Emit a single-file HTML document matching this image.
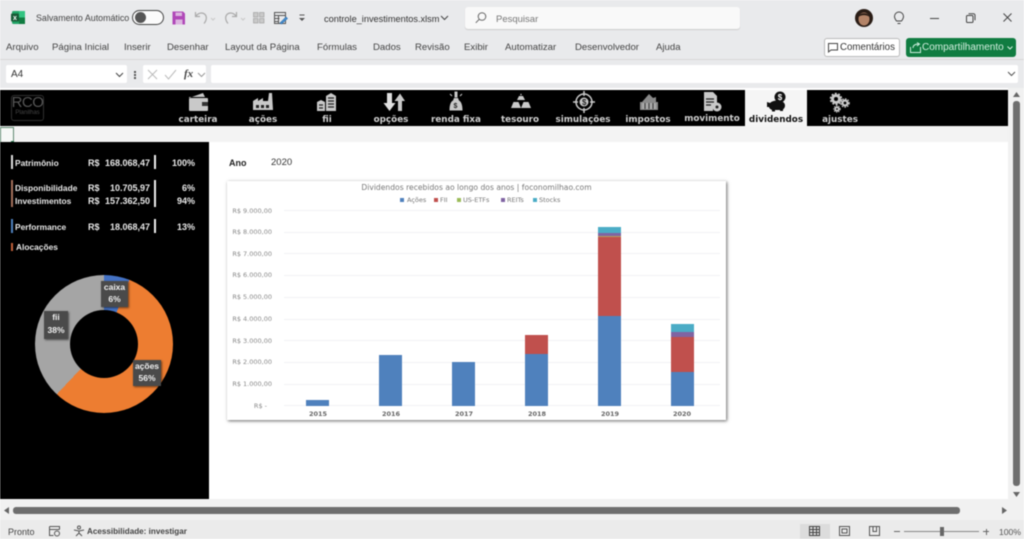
<!DOCTYPE html>
<html lang="pt"><head><meta charset="utf-8"><title>controle_investimentos</title>
<style>
html,body{margin:0;padding:0;width:1024px;height:539px;overflow:hidden;background:#fff}
#r{position:relative;width:1024px;height:539px;overflow:hidden;background:#e9eaec;font-family:"Liberation Sans",sans-serif;color:#333;filter:blur(.45px)}
.a{position:absolute;white-space:nowrap}
.m{font-size:9.6px;top:42px;color:#444;line-height:12px}
.n{position:absolute;top:114px;font:bold 8.8px/13px "DejaVu Sans",sans-serif;color:#cfcfcf;transform:translateX(-50%);white-space:nowrap}
.s{font:bold 9px/11px "Liberation Sans",sans-serif;color:#e8e8e8;position:absolute;white-space:nowrap;margin-top:1px}
.t{font-size:8.4px}
.rt{text-align:right}
.b{position:absolute;width:2px;background:#eee}
.y{position:absolute;font:6.5px/8px "DejaVu Sans",sans-serif;color:#888;width:55px;text-align:right;left:225px}
.g{position:absolute;left:284px;width:436px;height:1px;background:#f1f2f4}
.x{position:absolute;top:410px;font:bold 6.5px/8px "DejaVu Sans",sans-serif;color:#666;width:40px;text-align:center}
.l{position:absolute;background:#4a4a4a;color:#f0f0f0;font:bold 8.5px/12px "Liberation Sans",sans-serif;text-align:center;box-shadow:1px 1px 2px #0008}
.bar{position:absolute;width:23px}
svg{position:absolute;overflow:visible}
</style></head><body><div id="r">

<!-- title bar -->
<svg style="left:11px;top:11px" width="14" height="14"><rect x="1" y="0" width="13" height="13" rx="1.5" fill="#21a366"/><rect x="8" y="0" width="6" height="6.5" fill="#33c481"/><rect x="8" y="6.500" width="6" height="6.500" fill="#107c41"/><rect x="0" y="2.500" width="8" height="8" rx="1" fill="#185c37"/><text x="2" y="9" font-size="7" font-weight="bold" fill="#fff" font-family="Liberation Sans">x</text></svg>
<div class="a" style="left:36px;top:12px;font-size:8.9px;line-height:12px;color:#444">Salvamento Automático</div>
<div class="a" style="left:132px;top:10px;width:30px;height:13px;border:1px solid #444;border-radius:8px;background:#fbfbfb"></div>
<div class="a" style="left:135px;top:12px;width:11px;height:11px;border-radius:50%;background:#555"></div>
<svg style="left:172px;top:11px" width="14" height="14"><path d="M.5.5h10.500l2 2v11h-12.500z" fill="#b048b8"/><rect x="3.500" y="1.500" width="6.500" height="3.500" fill="#dcb4e0"/><rect x="3.500" y="8.500" width="7" height="5" fill="#dcb4e0"/></svg>
<svg style="left:194px;top:11px" width="24" height="14" fill="none" stroke="#aaa" stroke-width="1.200"><path d="M1.500 1v4.500h4.500M1.500 5.500C4 2 8 1 10.500 3c2.500 2 2.500 6-.5 9.500"/><path d="M17 7l2 2 2-2" stroke="#ccc"/></svg>
<svg style="left:224px;top:11px" width="24" height="14" fill="none" stroke="#aaa" stroke-width="1.200"><path d="M12.500 1v4.500H8M12.500 5.500C10 2 6 1 3.500 3 1 5 1 9 4 12.500"/><path d="M17 7l2 2 2-2" stroke="#ccc"/></svg>
<svg style="left:253px;top:12px" width="12" height="12" fill="#c9c9c9" stroke="#999" stroke-width=".6"><rect x=".5" y=".5" width="4.500" height="4.500"/><rect x="6.500" y=".5" width="4.500" height="4.500"/><rect x=".5" y="6.500" width="4.500" height="4.500"/><rect x="6.500" y="6.500" width="4.500" height="4.500"/></svg>
<svg style="left:274px;top:12px" width="14" height="13" fill="none" stroke="#555"><rect x=".5" y=".5" width="11" height="11"/><path d="M.5 3.500h11M.5 6.500h5M.5 9.500h4M4.500 3.500v8"/><path d="M6 11l6-6 1.500 1.500-6 5.500z" fill="#4a90d0" stroke="#2a70b0" stroke-width=".6"/></svg>
<svg style="left:298px;top:14px" width="8" height="8" fill="none" stroke="#555"><path d="M1.500 1h5"/><path d="M1 4l3 3 3-3z" fill="#555" stroke="none"/></svg>
<div class="a" style="left:324px;top:13px;font-size:9.2px;line-height:12px;color:#333">controle_investimentos.xlsm</div>
<svg style="left:440px;top:15px" width="9" height="6" fill="none" stroke="#444"><path d="M1 1l3.500 3.500L8 1"/></svg>
<div class="a" style="left:465px;top:7px;width:275px;height:22px;background:#f9f9f9;border-radius:3px;box-shadow:0 1px 1px #ccc"></div>
<svg style="left:475px;top:12px" width="12" height="12" fill="none" stroke="#666"><circle cx="7" cy="4.500" r="3.800"/><path d="M4.200 7.300L.8 10.800"/></svg>
<div class="a" style="left:496px;top:13px;font-size:9.500px;line-height:13px;color:#777">Pesquisar</div>
<svg style="left:855px;top:9px" width="18" height="18"><circle cx="9" cy="9" r="9" fill="#2a1d16"/><ellipse cx="9" cy="10" rx="5.500" ry="6.500" fill="#b48468"/><path d="M3.500 8C4 3 14 3 14.500 8 12 5.500 6 5.500 3.500 8z" fill="#2a1d16"/></svg>
<svg style="left:893px;top:11px" width="12" height="14" fill="none" stroke="#444"><path d="M3.500 10C2 8 1.500 7 1.500 5.500a4.500 4.500 0 0 1 9 0C10.500 7 10 8 8.500 10zM4.500 12.500h3"/></svg>
<div class="a" style="left:930px;top:18px;width:9px;height:1px;background:#444"></div>
<svg style="left:966px;top:13px" width="10" height="10" fill="none" stroke="#444"><rect x=".5" y="2.500" width="6.500" height="7" rx="1"/><path d="M2.500.8h5a1.500 1.500 0 0 1 1.500 1.500v5"/></svg>
<svg style="left:1003px;top:13px" width="9" height="9" fill="none" stroke="#444"><path d="M.5.5l8 8M8.500.5l-8 8"/></svg>

<!-- menu -->
<div class="a m" style="left:6px">Arquivo</div>
<div class="a m" style="left:52px">Página Inicial</div>
<div class="a m" style="left:124px">Inserir</div>
<div class="a m" style="left:167px">Desenhar</div>
<div class="a m" style="left:225px">Layout da Página</div>
<div class="a m" style="left:317px">Fórmulas</div>
<div class="a m" style="left:373px">Dados</div>
<div class="a m" style="left:415px">Revisão</div>
<div class="a m" style="left:464px">Exibir</div>
<div class="a m" style="left:505px">Automatizar</div>
<div class="a m" style="left:575px">Desenvolvedor</div>
<div class="a m" style="left:656px">Ajuda</div>
<div class="a" style="left:824px;top:38px;width:74px;height:17px;background:#fff;border:1px solid #bbb;border-radius:3px"></div>
<svg style="left:828px;top:43px" width="11" height="10" fill="none" stroke="#444"><path d="M.5.5h9v6.500H3L.5 9z"/></svg>
<div class="a" style="left:840px;top:41px;font-size:9.700px;line-height:13px;color:#333">Comentários</div>
<div class="a" style="left:906px;top:38px;width:110px;height:19px;background:#107c41;border-radius:3px"></div>
<svg style="left:910px;top:42px" width="12" height="11" fill="none" stroke="#cdeedd"><path d="M.5 5v5.500h10V5M3 6c0-3 3-4 6-4M7 .5l2.500 1.500L7 4"/></svg>
<div class="a" style="left:922px;top:41px;font-size:10px;line-height:13px;color:#d4efe0">Compartilhamento</div>
<svg style="left:1007px;top:46px" width="6" height="4" fill="none" stroke="#d4efe0"><path d="M.5.5L3 3 5.500.5"/></svg>
<div class="a" style="left:0;top:59px;width:1024px;height:1px;background:#d8d8d8"></div>

<!-- formula bar -->
<div class="a" style="left:6px;top:65px;width:121px;height:18px;background:#fff;border-radius:2px"></div>
<div class="a" style="left:11px;top:68px;font-size:10px;line-height:13px;color:#333">A4</div>
<svg style="left:115px;top:72px" width="9" height="6" fill="none" stroke="#444"><path d="M1 1l3.500 3.500L8 1"/></svg>
<div class="a" style="left:134px;top:71px;width:2px;height:2px;background:#555;box-shadow:0 3px #555,0 6px #555"></div>
<div class="a" style="left:143px;top:65px;width:63px;height:18px;background:#fff;border-radius:2px"></div>
<svg style="left:147px;top:69px" width="12" height="11" fill="none" stroke="#bbb"><path d="M1 1l9 9M10 1l-9 9"/></svg>
<svg style="left:164px;top:69px" width="13" height="11" fill="none" stroke="#bbb"><path d="M1 6l3.500 4L12 1"/></svg>
<div class="a" style="left:184px;top:67px;font:italic bold 11px/14px 'Liberation Serif',serif;color:#444">fx</div>
<svg style="left:197px;top:72px" width="9" height="6" fill="none" stroke="#999"><path d="M1 1l3.500 3.500L8 1"/></svg>
<div class="a" style="left:211px;top:65px;width:807px;height:18px;background:#fff;border-radius:2px"></div>
<svg style="left:1007px;top:71px" width="9" height="6" fill="none" stroke="#555"><path d="M1 1l3.500 3.500L8 1"/></svg>

<!-- sheet area -->
<div class="a" style="left:0;top:88px;width:1024px;height:432px;background:#fff"></div>
<div class="a" style="left:0;top:90px;width:1008px;height:36px;background:#000"></div>
<div class="a" style="left:745px;top:90px;width:62px;height:36px;background:#f5f5f5"></div>
<div class="a" style="left:0;top:126px;width:1008px;height:16px;background:#f3f3f3"></div>
<div class="a" style="left:0;top:127px;width:12px;height:14px;border:1px solid #5f8a72;background:#f6f8f6"></div>
<div class="a" style="left:11px;top:141px;width:3px;height:3px;background:#1f6e43"></div>
<div class="a" style="left:0;top:142px;width:209px;height:357px;background:#000"></div>

<!-- logo -->
<div class="a" style="left:11px;top:95px;width:31px;height:24px;border:1px solid #2e2e2e;border-radius:3px"></div>
<div class="a" style="left:11px;top:95px;width:33px;text-align:center;font-size:15px;line-height:16px;letter-spacing:-.5px;color:#555">RCO</div>
<div class="a" style="left:11px;top:110px;width:33px;text-align:center;font-size:6px;line-height:7px;color:#444">Planilhas</div>

<!-- nav icons -->
<svg style="left:188px;top:92px" width="22" height="20" fill="#c9c9c9"><path d="M1 6L15 1l2 4H1z"/><rect x="1" y="6" width="19" height="13" rx="1"/><rect x="14" y="10" width="6" height="4" fill="#333"/></svg>
<svg style="left:252px;top:92px" width="22" height="20" fill="#c9c9c9"><path d="M1 18V9l5-3v3l5-3v3h5l1-8h3l1 17z"/><path d="M4 13h3v3H4zM9 13h3v3H9zM14 13h3v3h-3z" fill="#222"/></svg>
<svg style="left:316px;top:92px" width="22" height="20" fill="#c9c9c9"><path d="M1 19V10l4-2 4 2v9z"/><path d="M10 19V4l5-3 5 3v15z"/><path d="M12 6h6M12 9h6M12 12h6M12 15h6M3 13h4M3 16h4" stroke="#222" stroke-width="1.300"/></svg>
<svg style="left:383px;top:92px" width="22" height="20" fill="#e0e0e0"><path d="M4 1h5v10h3.500L6.500 19 .5 11H4z"/><path d="M15 19V9h-3.500L17 1.500 22 9h-3v10z" fill="#c9c9c9"/></svg>
<svg style="left:447px;top:91px" width="18" height="21" fill="#c9c9c9"><path d="M8 1h2v5H8zM3 3l2 2M15 3l-2 2" stroke="#c9c9c9"/><path d="M7 7h4l1 2.500c2 1 3.500 4 3.500 10h-13C2.500 13.500 4 10.500 6 9.500z"/><text x="6.500" y="17" font-size="7" font-weight="bold" fill="#222" font-family="Liberation Sans">$</text></svg>
<svg style="left:510px;top:93px" width="22" height="18" fill="#c9c9c9"><path d="M7 7l2-4h4l2 4z"/><path d="M1 15l2.500-6h5L11 15z"/><path d="M11 15l2.500-6h5L21 15z"/><circle cx="11" cy="1.500" r=".8"/></svg>
<svg style="left:572px;top:90px" width="24" height="24" fill="none" stroke="#c9c9c9" stroke-width="1.500"><circle cx="12" cy="12" r="8"/><circle cx="12" cy="12" r="4.500" fill="#c9c9c9" stroke="none"/><path d="M12 1v5M12 18v5M1 12h5M18 12h5"/><text x="10" y="15" font-size="8" font-weight="bold" fill="#222" stroke="none" font-family="Liberation Sans">$</text></svg>
<svg style="left:639px;top:93px" width="20" height="18" fill="#8a8a8a"><path d="M10 1l4 4 3-1v5h2v8H1V9h2z"/><rect x="3" y="10" width="14" height="6" fill="#a8a8a8"/><path d="M6 10v6M10 10v6M14 10v6" stroke="#333"/></svg>
<svg style="left:703px;top:91px" width="20" height="21" fill="#c9c9c9"><path d="M1 1h9l4 4v9H10v6H1z"/><path d="M3 8h8M3 11h8M3 14h5" stroke="#222" stroke-width="1.200"/><circle cx="14" cy="16" r="4.500"/><circle cx="14" cy="16" r="1.500" fill="#222"/></svg>
<svg style="left:766px;top:91px" width="22" height="22"><circle cx="14" cy="6" r="5.500" fill="#111"/><text x="11.800" y="9" font-size="8" font-weight="bold" fill="#fff" font-family="Liberation Sans">$</text><path d="M1 11l3 1c2-2 5-2.500 8-2.500 4 0 7 2 7 5 0 2-1 3-2 4v1.500h-3V19H9v1.500H6V19c-2-1-3-2-3-3H1z" fill="#111"/></svg>
<svg style="left:829px;top:91px" width="22" height="22" fill="none" stroke="#c9c9c9"><circle cx="7" cy="8" r="3.500" stroke-width="3"/><circle cx="7" cy="8" r="5.500" stroke-width="1.500" stroke-dasharray="2 1.500"/><circle cx="16" cy="12" r="2.500" stroke-width="2.200"/><circle cx="16" cy="12" r="4.200" stroke-width="1.200" stroke-dasharray="1.600 1.200"/><circle cx="8" cy="18" r="1.800" stroke-width="1.800"/><circle cx="8" cy="18" r="3.200" stroke-width="1" stroke-dasharray="1.300 1"/></svg>

<!-- nav labels -->
<div class="n" style="left:198px">carteira</div>
<div class="n" style="left:263px">ações</div>
<div class="n" style="left:327px">fii</div>
<div class="n" style="left:391px">opções</div>
<div class="n" style="left:456px">renda fixa</div>
<div class="n" style="left:520px">tesouro</div>
<div class="n" style="left:583px">simulações</div>
<div class="n" style="left:648px">impostos</div>
<div class="n" style="left:712px;top:113px">movimento</div>
<div class="n" style="left:776px;color:#111">dividendos</div>
<div class="n" style="left:840px">ajustes</div>

<!-- side panel -->
<div class="b" style="left:11px;top:155px;height:14px;background:#ddd"></div>
<div class="s t" style="left:15px;top:157px">Patrimônio</div>
<div class="s" style="left:88px;top:157px">R$</div>
<div class="s rt" style="left:100px;top:157px;width:50px">168.068,47</div>
<div class="b" style="left:154px;top:155px;height:14px"></div>
<div class="s rt" style="left:160px;top:157px;width:35px">100%</div>

<div class="b" style="left:11px;top:180px;height:27px;background:#a5705c"></div>
<div class="s t" style="left:15px;top:182px">Disponibilidade</div>
<div class="s" style="left:88px;top:182px">R$</div>
<div class="s rt" style="left:100px;top:182px;width:50px">10.705,97</div>
<div class="b" style="left:154px;top:180px;height:27px"></div>
<div class="s rt" style="left:160px;top:182px;width:35px">6%</div>
<div class="s t" style="left:15px;top:195px">Investimentos</div>
<div class="s" style="left:88px;top:195px">R$</div>
<div class="s rt" style="left:100px;top:195px;width:50px">157.362,50</div>
<div class="s rt" style="left:160px;top:195px;width:35px">94%</div>

<div class="b" style="left:11px;top:219px;height:14px;background:#4f81bd"></div>
<div class="s t" style="left:15px;top:221px">Performance</div>
<div class="s" style="left:88px;top:221px">R$</div>
<div class="s rt" style="left:100px;top:221px;width:50px">18.068,47</div>
<div class="b" style="left:154px;top:219px;height:14px"></div>
<div class="s rt" style="left:160px;top:221px;width:35px">13%</div>

<div class="b" style="left:11px;top:243px;height:8px;width:1.500px;background:#c0603a"></div>
<div class="s t" style="left:16px;top:241px">Alocações</div>

<!-- donut -->
<div class="a" style="left:35px;top:275px;width:138px;height:138px;border-radius:50%;background:conic-gradient(#4472c4 0 21.600deg,#ed7d31 21.600deg 223.200deg,#a5a5a5 223.200deg 360deg)"></div>
<div class="a" style="left:70px;top:310px;width:68px;height:68px;border-radius:50%;background:#000"></div>
<div class="l" style="left:101px;top:281px;width:27px;height:26px">caixa<br>6%</div>
<div class="l" style="left:44px;top:311px;width:24px;height:28px;line-height:13px">fii<br>38%</div>
<div class="l" style="left:133px;top:360px;width:28px;height:26px">ações<br>56%</div>

<!-- content -->
<div class="a" style="left:229px;top:157px;font-size:9px;line-height:12px;font-weight:bold;color:#222">Ano</div>
<div class="a" style="left:271px;top:157px;font-size:9.500px;line-height:12px;color:#333">2020</div>

<!-- chart -->
<div class="a" style="left:227px;top:181px;width:499px;height:239px;background:#fff;box-shadow:1px 1px 3px #666"></div>
<div class="a" style="left:227px;top:183px;width:499px;text-align:center;font:7.600px/10px 'DejaVu Sans',sans-serif;color:#777">Dividendos recebidos ao longo dos anos | foconomilhao.com</div>
<div class="a" style="left:407px;top:196px;font:6.500px/8px 'DejaVu Sans',sans-serif;color:#777">Ações</div>
<div class="a" style="left:440px;top:196px;font:6.500px/8px 'DejaVu Sans',sans-serif;color:#777">FII</div>
<div class="a" style="left:463px;top:196px;font:6.500px/8px 'DejaVu Sans',sans-serif;color:#777">US-ETFs</div>
<div class="a" style="left:507px;top:196px;font:6.500px/8px 'DejaVu Sans',sans-serif;color:#777">REITs</div>
<div class="a" style="left:539px;top:196px;font:6.500px/8px 'DejaVu Sans',sans-serif;color:#777">Stocks</div>
<div class="a" style="left:400px;top:198px;width:4px;height:4px;background:#4f81bd"></div>
<div class="a" style="left:434px;top:198px;width:4px;height:4px;background:#c0504d"></div>
<div class="a" style="left:457px;top:198px;width:4px;height:4px;background:#9bbb59"></div>
<div class="a" style="left:501px;top:198px;width:4px;height:4px;background:#8064a2"></div>
<div class="a" style="left:533px;top:198px;width:4px;height:4px;background:#4bacc6"></div>

<div class="g" style="top:210px"></div><div class="g" style="top:232px"></div><div class="g" style="top:253px"></div><div class="g" style="top:275px"></div><div class="g" style="top:297px"></div><div class="g" style="top:319px"></div><div class="g" style="top:340px"></div><div class="g" style="top:362px"></div><div class="g" style="top:384px"></div><div class="g" style="top:405px"></div>
<div class="y" style="top:207px;left:217px">R$ 9.000,00</div>
<div class="y" style="top:228px;left:217px">R$ 8.000,00</div>
<div class="y" style="top:250px;left:217px">R$ 7.000,00</div>
<div class="y" style="top:271px;left:217px">R$ 6.000,00</div>
<div class="y" style="top:293px;left:217px">R$ 5.000,00</div>
<div class="y" style="top:315px;left:217px">R$ 4.000,00</div>
<div class="y" style="top:337px;left:217px">R$ 3.000,00</div>
<div class="y" style="top:358px;left:217px">R$ 2.000,00</div>
<div class="y" style="top:380px;left:217px">R$ 1.000,00</div>
<div class="y" style="top:402px;left:212px">R$ -</div>

<div class="bar" style="left:306px;top:400px;height:6px;background:#4f81bd"></div>
<div class="bar" style="left:379px;top:355px;height:51px;background:#4f81bd"></div>
<div class="bar" style="left:452px;top:362px;height:44px;background:#4f81bd"></div>
<div class="bar" style="left:525px;top:354px;height:52px;background:#4f81bd"></div>
<div class="bar" style="left:525px;top:335px;height:19px;background:#c0504d"></div>
<div class="bar" style="left:598px;top:316px;height:90px;background:#4f81bd"></div>
<div class="bar" style="left:598px;top:237px;height:79px;background:#c0504d"></div>
<div class="bar" style="left:598px;top:236px;height:1px;background:#b5a060"></div>
<div class="bar" style="left:598px;top:233px;height:3px;background:#8064a2"></div>
<div class="bar" style="left:598px;top:227px;height:6px;background:#4bacc6"></div>
<div class="bar" style="left:671px;top:372px;height:34px;background:#4f81bd"></div>
<div class="bar" style="left:671px;top:337px;height:35px;background:#c0504d"></div>
<div class="bar" style="left:671px;top:332px;height:5px;background:#8064a2"></div>
<div class="bar" style="left:671px;top:324px;height:8px;background:#4bacc6"></div>

<div class="x" style="left:298px">2015</div><div class="x" style="left:371px">2016</div><div class="x" style="left:444px">2017</div><div class="x" style="left:517px">2018</div><div class="x" style="left:590px">2019</div><div class="x" style="left:662px">2020</div>

<!-- scrollbars -->
<div class="a" style="left:1008px;top:88px;width:16px;height:432px;background:#f1f1f1"></div>
<div class="a" style="left:1013px;top:101px;width:7px;height:385px;border-radius:3px;background:#6e6e6e"></div>
<svg style="left:1013px;top:92px" width="7" height="5" fill="#666"><path d="M3.500 0L7 5H0z"/></svg>
<svg style="left:1013px;top:492px" width="7" height="5" fill="#666"><path d="M3.500 5L7 0H0z"/></svg>
<div class="a" style="left:0;top:499px;width:1024px;height:21px;background:#f1f1f1"></div>
<div class="a" style="left:13px;top:507px;width:947px;height:7px;border-radius:3px;background:#6e6e6e"></div>
<svg style="left:4px;top:507px" width="5" height="7" fill="#666"><path d="M0 3.500L5 0v7z"/></svg>
<svg style="left:1002px;top:507px" width="5" height="7" fill="#666"><path d="M5 3.500L0 0v7z"/></svg>

<!-- status bar -->
<div class="a" style="left:0;top:520px;width:1024px;height:19px;background:#ebebeb"></div>
<div class="a" style="left:8px;top:526px;font-size:9px;line-height:12px;color:#444">Pronto</div>
<svg style="left:49px;top:526px" width="12" height="11" fill="none" stroke="#555"><path d="M.5.5h10v3M.5.5v9h4M.5 3.500h10"/><circle cx="8" cy="7.500" r="2.500"/></svg>
<svg style="left:73px;top:525px" width="12" height="12" fill="none" stroke="#555"><circle cx="6" cy="2.500" r="1.500"/><path d="M1 5l5 1 5-1M6 6v2M3 11l3-3 3 3"/></svg>
<div class="a" style="left:87px;top:526px;font-size:8.100px;line-height:12px;font-weight:bold;color:#444">Acessibilidade: investigar</div>
<div class="a" style="left:800px;top:524px;width:30px;height:15px;background:#dcdcdc"></div>
<svg style="left:809px;top:526px" width="11" height="10" fill="none" stroke="#444"><path d="M.5.500h10v9H.5zM.5 3.500h10M.5 6.500h10M4 .5v9M7.500.5v9"/></svg>
<svg style="left:839px;top:526px" width="11" height="10" fill="none" stroke="#555"><path d="M.5.500h10v9H.5z"/><path d="M3 3h5v4H3z"/></svg>
<svg style="left:869px;top:526px" width="11" height="10" fill="none" stroke="#555"><path d="M.5.500h10v9H.5zM4 .5v5h3.500V.5"/></svg>
<div class="a" style="left:894px;top:531px;width:6px;height:1px;background:#666"></div>
<div class="a" style="left:904px;top:531px;width:75px;height:1px;background:#888"></div>
<div class="a" style="left:940px;top:527px;width:4px;height:9px;background:#666"></div>
<div class="a" style="left:983px;top:531px;width:6px;height:1px;background:#666"></div>
<div class="a" style="left:985.500px;top:528.500px;width:1px;height:6px;background:#666"></div>
<div class="a" style="left:999px;top:526px;font-size:8.600px;line-height:12px;color:#555">100%</div>

</div></body></html>
